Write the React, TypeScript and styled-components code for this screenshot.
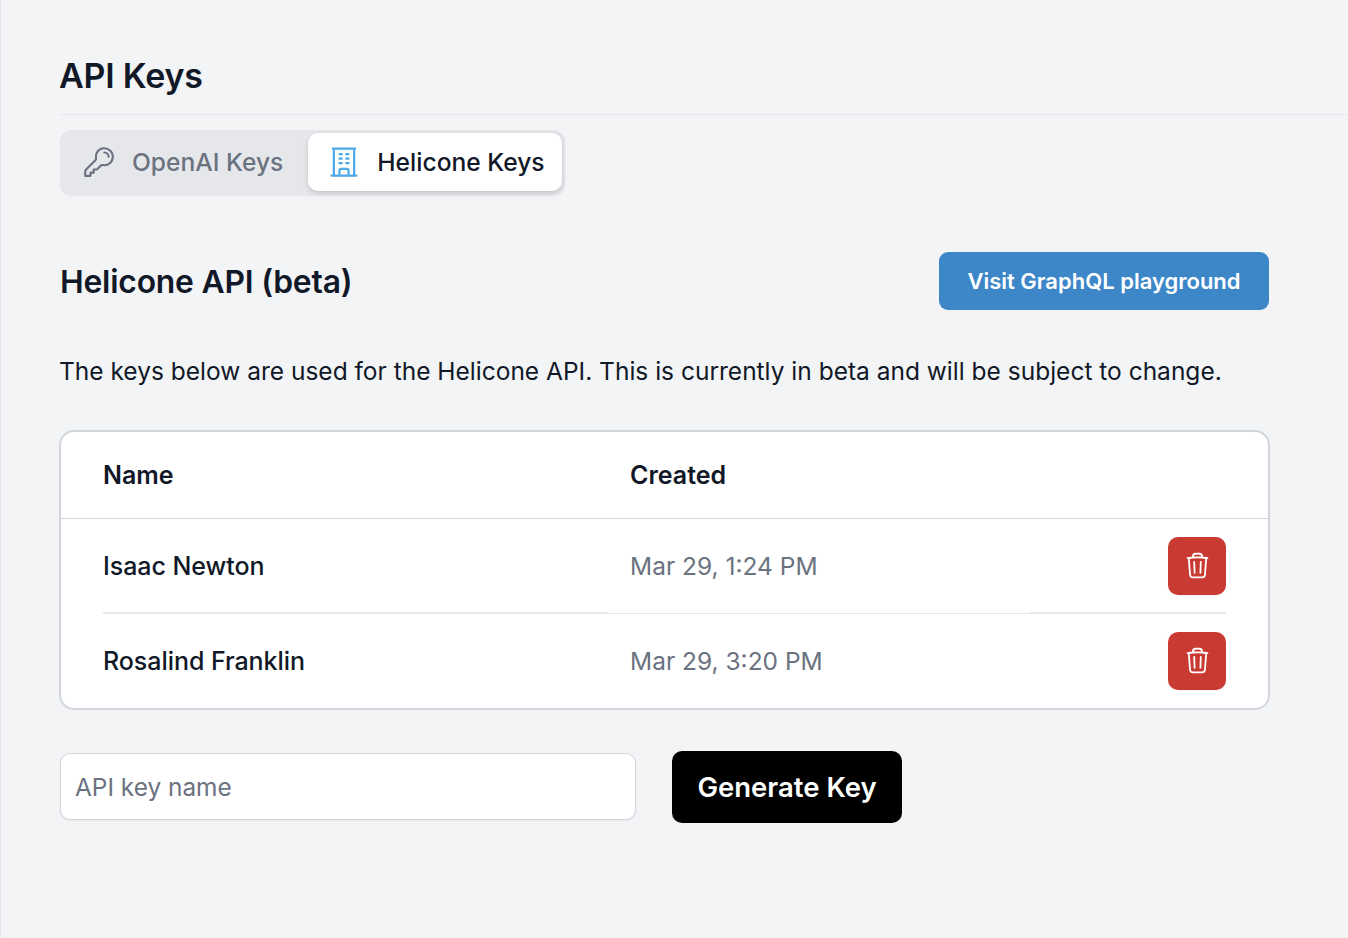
import React from 'react'
import styled, { createGlobalStyle } from 'styled-components'
import { HiOutlineKey, HiOutlineBuildingOffice, HiOutlineTrash } from 'react-icons/hi2'

const GlobalStyle = createGlobalStyle`
    html, body {
        margin: 0;
        padding: 0;
        background: #f3f4f6;
    }
    * {
        box-sizing: border-box;
    }
`

const keys = [
    { name: 'Isaac Newton', created: 'Mar 29, 1:24 PM' },
    { name: 'Rosalind Franklin', created: 'Mar 29, 3:20 PM' },
]

const App: React.FC = () => {
    return (
        <Page>
            <GlobalStyle />
            <Title>API Keys</Title>
            <Tabs>
                <Tab>
                    <KeyIcon />
                    OpenAI Keys
                </Tab>
                <Tab $active>
                    <BuildingIcon />
                    Helicone Keys
                </Tab>
            </Tabs>
            <Content>
                <SectionHeader>
                    <SectionTitle>Helicone API (beta)</SectionTitle>
                    <PlaygroundButton>Visit GraphQL playground</PlaygroundButton>
                </SectionHeader>
                <Description>
                    The keys below are used for the Helicone API. This is currently in beta and will be subject to change.
                </Description>
                <TableCard>
                    <HeaderRow>
                        <HeaderName>Name</HeaderName>
                        <HeaderCreated>Created</HeaderCreated>
                    </HeaderRow>
                    {keys.map((key, i) => (
                        <Row key={key.name}>
                            <NameCell $divided={i === 0}>{key.name}</NameCell>
                            <CreatedCell $divided={i === 0}>{key.created}</CreatedCell>
                            <ActionCell $divided={i === 0}>
                                <DeleteButton>
                                    <TrashIcon />
                                </DeleteButton>
                            </ActionCell>
                        </Row>
                    ))}
                </TableCard>
                <GenerateForm>
                    <KeyInput placeholder="API key name" />
                    <GenerateButton>Generate Key</GenerateButton>
                </GenerateForm>
            </Content>
        </Page>
    )
}

const Page = styled.div`
    min-height: 938px;
    padding: 0 0 0 59px;
    border-left: 1px solid #e5e7eb;
    background: #f3f4f6;
    color: #111827;
    font-family: Inter, "Liberation Sans", sans-serif;
`

const Title = styled.h1`
    margin: 0;
    height: 115px;
    padding-top: 54px;
    border-bottom: 1px solid #e5e7eb;
    font-size: 34px;
    line-height: 44px;
    font-weight: 600;
    letter-spacing: -0.2px;
    text-indent: -1px;
`

const Tabs = styled.div`
    display: inline-flex;
    margin-top: 15px;
    padding: 3px;
    height: 65px;
    border-radius: 12px;
    background: #e5e7eb;
    box-shadow: 0 1px 2px rgba(0, 0, 0, 0.06);
    vertical-align: top;
`

const Tab = styled.div<{ $active?: boolean }>`
    display: flex;
    align-items: center;
    gap: 16px;
    height: 58px;
    border-radius: 10px;
    font-size: 24.6px;
    font-weight: 500;
    padding: ${props => (props.$active ? '0 17px 0 19px' : '0 25px 0 19px')};
    color: ${props => (props.$active ? '#111827' : '#6b7280')};
    background: ${props => (props.$active ? '#ffffff' : 'transparent')};
    box-shadow: ${props => (props.$active ? '0 2px 5px rgba(0, 0, 0, 0.16)' : 'none')};
`

const KeyIcon = styled(HiOutlineKey)`
    width: 34px;
    height: 34px;
    color: #6b7280;
`

const BuildingIcon = styled(HiOutlineBuildingOffice)`
    width: 36px;
    height: 36px;
    margin: 0 -1px;
    color: #4ea8ea;
`

const Content = styled.div`
    width: 1209px;
`

const SectionHeader = styled.div`
    display: flex;
    align-items: center;
    justify-content: space-between;
    margin-top: 57px;
    height: 58px;
`

const SectionTitle = styled.h2`
    margin: 0;
    padding-top: 1px;
    font-size: 31.8px;
    font-weight: 600;
    letter-spacing: -0.2px;
`

const PlaygroundButton = styled.button`
    width: 330px;
    height: 58px;
    border: none;
    border-radius: 9px;
    background: #3d87c9;
    color: #ffffff;
    font-family: inherit;
    font-size: 22px;
    font-weight: 600;
`

const Description = styled.p`
    margin: 44px 0 0 -1px;
    height: 35px;
    font-size: 24.5px;
    line-height: 35px;
    white-space: nowrap;
`

const TableCard = styled.div`
    margin: 41px 0 0 -1px;
    width: 1211px;
    height: 280px;
    border: 2px solid #d1d5db;
    border-radius: 15px;
    background: #ffffff;
    overflow: hidden;
`

const HeaderRow = styled.div`
    display: flex;
    align-items: center;
    height: 87px;
    padding-left: 42px;
    border-bottom: 1px solid #d1d5db;
    font-size: 25px;
    font-weight: 600;
`

const HeaderName = styled.div`
    width: 527px;
`

const HeaderCreated = styled.div``

const Row = styled.div`
    display: flex;
    height: 95px;
    padding: 0 42px;
`

const Cell = styled.div<{ $divided?: boolean }>`
    display: flex;
    align-items: center;
    height: 95px;
    font-size: 25px;
    border-bottom: 2px solid ${props => (props.$divided ? '#e5e7eb' : 'transparent')};
`

const NameCell = styled(Cell)`
    width: 505px;
    font-weight: 500;
    letter-spacing: -0.05px;
`

const CreatedCell = styled(Cell)`
    width: 422px;
    padding: 0 0 1px 22px;
    border-bottom-width: 1px;
    color: #6b7280;
    font-size: 24.5px;
`

const ActionCell = styled(Cell)`
    flex: 1;
    justify-content: flex-end;
`

const DeleteButton = styled.button`
    display: flex;
    align-items: center;
    justify-content: center;
    width: 58px;
    height: 58px;
    padding: 0;
    border: none;
    border-radius: 10px;
    background: #c93a32;
    box-shadow: 0 1px 2px rgba(0, 0, 0, 0.05);
`

const TrashIcon = styled(HiOutlineTrash)`
    width: 29px;
    height: 29px;
    color: #ffffff;
`

const GenerateForm = styled.div`
    display: flex;
    align-items: flex-start;
    gap: 36px;
    margin-top: 41px;
`

const KeyInput = styled.input`
    width: 576px;
    height: 67px;
    margin-top: 2px;
    padding: 1px 14px 0;
    border: 1px solid #d1d5db;
    border-radius: 10px;
    background: #ffffff;
    box-shadow: 0 1px 2px rgba(0, 0, 0, 0.05);
    color: #111827;
    font-family: inherit;
    font-size: 24.4px;
    outline: none;

    &::placeholder {
        color: #6b7280;
        opacity: 1;
    }
`

const GenerateButton = styled.button`
    flex: none;
    width: 230px;
    height: 72px;
    border: none;
    border-radius: 10px;
    background: #000000;
    color: #ffffff;
    font-family: inherit;
    font-size: 27.5px;
    font-weight: 600;
`

export default App
